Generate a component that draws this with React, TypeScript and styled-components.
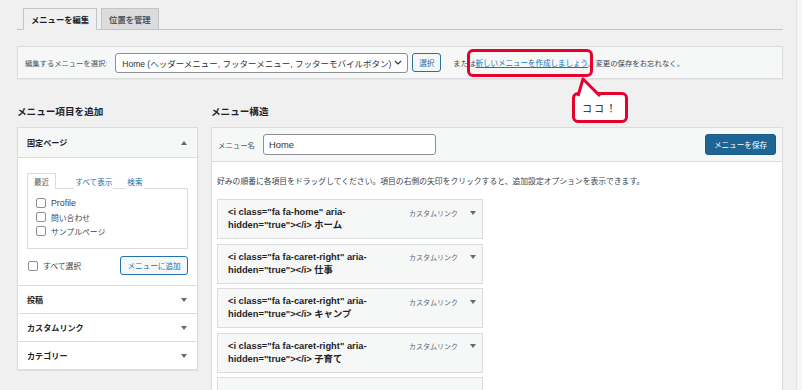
import React from "react";
import styled, { createGlobalStyle } from "styled-components";

const GlobalStyle = createGlobalStyle`
  html, body {
    margin: 0;
    padding: 0;
    background: #f0f0f1;
    font-family: "Liberation Sans", "Noto Sans CJK JP", sans-serif;
    color: #3c434a;
  }
  * { box-sizing: border-box; }
`;

const Page = styled.div`
  position: relative;
  display: flex;
  width: 802px;
  height: 390px;
  overflow: hidden;
`;

const Main = styled.div`
  width: 796px;
  padding: 8px 13px 0 17px;
`;

const EdgeStrip = styled.div`
  width: 6px;
  background: #f6f6f6;
  border-left: 1px solid #e3e3e3;
`;

const NavTabs = styled.div`
  display: flex;
  gap: 4px;
  padding-left: 6px;
  border-bottom: 1px solid #c3c4c7;
`;

const NavTab = styled.div<{ active?: boolean }>`
  height: 22px;
  padding: 0 7px;
  display: flex;
  align-items: center;
  font-size: 8.3px;
  font-weight: 700;
  color: ${p => (p.active ? "#1d2327" : "#50575e")};
  background: ${p => (p.active ? "#f0f0f1" : "#dcdcde")};
  border: 1px solid #c3c4c7;
  border-bottom-color: ${p => (p.active ? "#f0f0f1" : "#c3c4c7")};
  margin-bottom: -1px;
`;

const ManageBar = styled.div`
  margin-top: 16px;
  height: 33px;
  display: flex;
  align-items: center;
  padding-left: 7px;
  background: #f6f7f7;
  border: 1px solid #dcdcde;
  box-shadow: 0 1px 1px rgba(0, 0, 0, 0.04);
  color: #3c434a;
`;

const BarLabel = styled.span`
  font-size: 7.3px;
  color: #50575e;
  margin-right: 8px;
`;

const Select = styled.div`
  width: 293px;
  height: 20px;
  display: flex;
  align-items: center;
  justify-content: space-between;
  padding: 0 5px 0 6px;
  margin-right: 4px;
  background: #fff;
  border: 1px solid #8c8f94;
  border-radius: 3px;
  font-size: 8.5px;
  color: #2c3338;
  white-space: nowrap;
`;

const OutlineButton = styled.div<{ w: number }>`
  height: 19px;
  width: ${p => p.w}px;
  display: flex;
  align-items: center;
  justify-content: center;
  background: #f6f7f7;
  border: 1px solid #2271b1;
  border-radius: 3px;
  color: #2271b1;
  font-size: 7.6px;
  white-space: nowrap;
`;

const BarText = styled.span`
  margin-left: 12px;
  white-space: nowrap;
  font-size: 7.4px;
`;

const CreateLink = styled.span`
  color: #2271b1;
  text-decoration: underline;
  font-size: 7.5px;
`;

const Highlight = styled.div`
  position: absolute;
  left: 467px;
  top: 49px;
  width: 126px;
  height: 28px;
  border: 3px solid #e8002d;
  border-radius: 6px;
`;

const Callout = styled.div`
  position: absolute;
  left: 572px;
  top: 92px;
  width: 56px;
  height: 31px;
  display: flex;
  align-items: center;
  justify-content: center;
  background: #fff;
  border: 3px solid #e8002d;
  border-radius: 6px;
  font-size: 10px;
  color: #111;
  letter-spacing: 2px;
`;

const Tail = styled.svg`
  position: absolute;
  left: 0;
  top: -18px;
`;

const Columns = styled.div`
  display: flex;
  gap: 13px;
  margin-top: 24px;
`;

const LeftCol = styled.div`
  width: 181px;
`;

const RightCol = styled.div`
  flex: 1;
`;

const ColTitle = styled.div`
  font-size: 9.6px;
  font-weight: 700;
  color: #1d2327;
  height: 16px;
  display: flex;
  align-items: center;
  margin-bottom: 8px;
`;

const Accordion = styled.div`
  background: #fff;
  border: 1px solid #dcdcde;
  box-shadow: 0 1px 1px rgba(0, 0, 0, 0.06);
`;

const SectionHead = styled.div<{ open?: boolean }>`
  height: ${p => (p.open ? 30 : 28)}px;
  display: flex;
  align-items: center;
  justify-content: space-between;
  padding: 0 10px 0 9px;
  font-size: 8.1px;
  font-weight: 700;
  color: #1d2327;
  background: ${p => (p.open ? "#f6f7f7" : "#fff")};
  border-top: ${p => (p.open ? "none" : "1px solid #dcdcde")};
  border-bottom: ${p => (p.open ? "1px solid #dcdcde" : "none")};
`;

const SectionBody = styled.div`
  padding: 14px 9px 10px 9px;
`;

const InnerTabs = styled.div`
  display: flex;
  align-items: flex-end;
  height: 16px;
  font-size: 7.6px;
`;

const InnerTab = styled.div<{ active?: boolean; gap?: number }>`
  height: 16px;
  display: flex;
  align-items: center;
  padding: 0 ${p => (p.active ? 6 : 0)}px;
  margin-left: ${p => p.gap || 0}px;
  color: ${p => (p.active ? "#50575e" : "#2271b1")};
  border: 1px solid ${p => (p.active ? "#dcdcde" : "transparent")};
  border-bottom: none;
  background: #fff;
  position: relative;
  z-index: 1;
  margin-bottom: -1px;
`;

const TabPanel = styled.div`
  border: 1px solid #dcdcde;
  height: 61px;
  padding: 9px 8px;
  display: flex;
  flex-direction: column;
  gap: 4px;
`;

const CheckRow = styled.label`
  display: flex;
  align-items: center;
  gap: 5px;
  font-size: 7.8px;
  color: #3c434a;
  height: 10px;
`;

const Latin = styled.span`
  font-size: 8.8px;
`;

const Box = styled.span`
  width: 10px;
  height: 10px;
  border: 1px solid #8c8f94;
  border-radius: 2px;
  background: #fff;
  flex: none;
`;

const AddRow = styled.div`
  display: flex;
  align-items: center;
  justify-content: space-between;
  margin-top: 7px;
  padding-left: 1px;
`;

const StructPanel = styled.div`
  background: #fff;
  border: 1px solid #dcdcde;
  height: 300px;
`;

const StructHead = styled.div`
  height: 34px;
  display: flex;
  align-items: center;
  padding: 0 6px 0 6px;
  background: #f6f7f7;
  border-bottom: 1px solid #dcdcde;
  font-size: 7.4px;
  color: #50575e;
`;

const NameInput = styled.div`
  margin-left: 8px;
  width: 173px;
  height: 21px;
  display: flex;
  align-items: center;
  padding: 0 5px;
  background: #fff;
  border: 1px solid #8c8f94;
  border-radius: 3px;
  font-size: 9.4px;
  color: #2c3338;
`;

const SaveButton = styled.div`
  margin-left: auto;
  width: 71px;
  height: 21px;
  display: flex;
  align-items: center;
  justify-content: center;
  background: #1e6596;
  border: 1px solid #1a5a87;
  border-radius: 3px;
  color: #fff;
  font-size: 7.6px;
`;

const StructBody = styled.div`
  padding: 12px 5px 0 5px;
`;

const Desc = styled.div`
  font-size: 7.8px;
  color: #3c434a;
  height: 12px;
  display: flex;
  align-items: center;
  white-space: nowrap;
  margin-bottom: 13px;
`;

const ItemList = styled.div`
  display: flex;
  flex-direction: column;
  gap: 4.5px;
`;

const Item = styled.div`
  width: 266px;
  height: 40px;
  display: flex;
  justify-content: space-between;
  padding: 6px 6px 0 10px;
  background: #f6f7f7;
  border: 1px solid #dcdcde;
`;

const ItemTitle = styled.div`
  font-size: 9.3px;
  font-weight: 700;
  color: #1d2327;
  line-height: 13px;
  white-space: nowrap;
`;

const ItemMeta = styled.div`
  display: flex;
  align-items: center;
  gap: 12px;
  height: 13px;
  font-size: 7px;
  color: #646970;
`;

const Triangle = ({ up }: { up?: boolean }) => (
  <svg width="6" height="4" viewBox="0 0 6 4">
    <polygon points={up ? "0,4 6,4 3,0" : "0,0 6,0 3,4"} fill="#646970" />
  </svg>
);

const items = [
  ['<i class="fa fa-home" aria-', 'hidden="true"></i> ホーム'],
  ['<i class="fa fa-caret-right" aria-', 'hidden="true"></i> 仕事'],
  ['<i class="fa fa-caret-right" aria-', 'hidden="true"></i> キャンプ'],
  ['<i class="fa fa-caret-right" aria-', 'hidden="true"></i> 子育て'],
];

const App = () => {
  return (
    <Page>
      <GlobalStyle />
      <Main>
        <NavTabs>
          <NavTab active>メニューを編集</NavTab>
          <NavTab>位置を管理</NavTab>
        </NavTabs>

        <ManageBar>
          <BarLabel>編集するメニューを選択:</BarLabel>
          <Select>
            <span>Home (ヘッダーメニュー, フッターメニュー, フッターモバイルボタン)</span>
            <svg width="8" height="5" viewBox="0 0 8 5">
              <polyline points="1,1 4,4 7,1" fill="none" stroke="#2c3338" strokeWidth="1.2" />
            </svg>
          </Select>
          <OutlineButton w={29}>選択</OutlineButton>
          <BarText>
            または<CreateLink>新しいメニューを作成しましょう</CreateLink>。変更の保存をお忘れなく。
          </BarText>
        </ManageBar>

        <Columns>
          <LeftCol>
            <ColTitle>メニュー項目を追加</ColTitle>
            <Accordion>
              <SectionHead open>
                <span>固定ページ</span>
                <Triangle up />
              </SectionHead>
              <SectionBody>
                <InnerTabs>
                  <InnerTab active>最近</InnerTab>
                  <InnerTab gap={18}>すべて表示</InnerTab>
                  <InnerTab gap={13}>検索</InnerTab>
                </InnerTabs>
                <TabPanel>
                  <CheckRow><Box /><Latin>Profile</Latin></CheckRow>
                  <CheckRow><Box />問い合わせ</CheckRow>
                  <CheckRow><Box />サンプルページ</CheckRow>
                </TabPanel>
                <AddRow>
                  <CheckRow><Box />すべて選択</CheckRow>
                  <OutlineButton w={68}>メニューに追加</OutlineButton>
                </AddRow>
              </SectionBody>
              <SectionHead>
                <span>投稿</span>
                <Triangle />
              </SectionHead>
              <SectionHead>
                <span>カスタムリンク</span>
                <Triangle />
              </SectionHead>
              <SectionHead>
                <span>カテゴリー</span>
                <Triangle />
              </SectionHead>
            </Accordion>
          </LeftCol>

          <RightCol>
            <ColTitle>メニュー構造</ColTitle>
            <StructPanel>
              <StructHead>
                メニュー名
                <NameInput>Home</NameInput>
                <SaveButton>メニューを保存</SaveButton>
              </StructHead>
              <StructBody>
                <Desc>
                  好みの順番に各項目をドラッグしてください。項目の右側の矢印をクリックすると、追加設定オプションを表示できます。
                </Desc>
                <ItemList>
                  {items.map((lines, i) => (
                    <Item key={i}>
                      <ItemTitle>
                        {lines[0]}
                        <br />
                        {lines[1]}
                      </ItemTitle>
                      <ItemMeta>
                        <span>カスタムリンク</span>
                        <Triangle />
                      </ItemMeta>
                    </Item>
                  ))}
                  <Item />
                </ItemList>
              </StructBody>
            </StructPanel>
          </RightCol>
        </Columns>
      </Main>
      <EdgeStrip />

      <Highlight />
      <Callout>
        <Tail width="30" height="21" viewBox="0 0 30 21">
          <polygon points="3,21 8,3 25,21" fill="#fff" />
          <polyline points="3,19 8,2 25,19" fill="none" stroke="#e8002d" strokeWidth="3" strokeLinejoin="round" />
        </Tail>
        ココ！
      </Callout>
    </Page>
  );
};

export default App;
